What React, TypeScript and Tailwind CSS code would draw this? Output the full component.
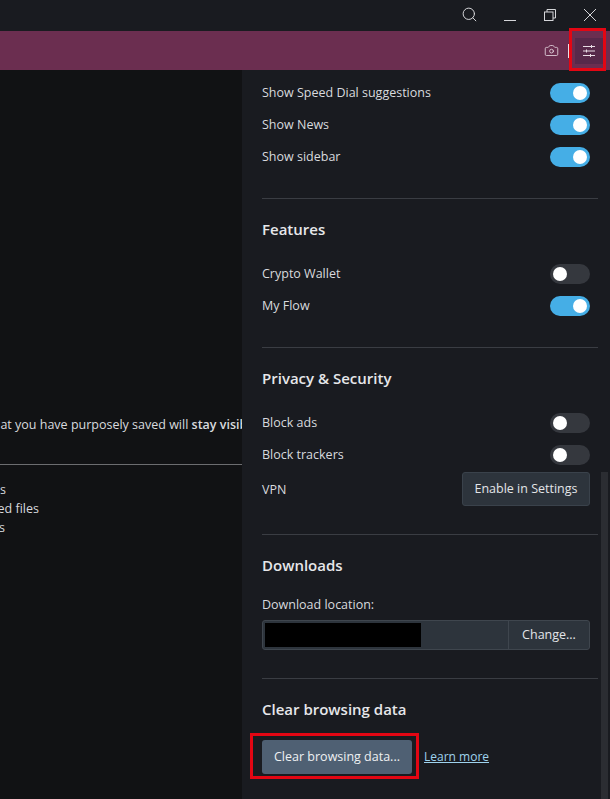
import React from 'react';
import { Camera, Search } from 'lucide-react';

function Toggle({ on }: { on: boolean }) {
  return on ? (
    <div className="flex h-5 w-10 items-center justify-end rounded-full bg-[#45aee6] px-[3px]">
      <div className="h-[14px] w-[14px] rounded-full bg-white" />
    </div>
  ) : (
    <div className="flex h-5 w-10 items-center justify-start rounded-full bg-[#35383e] px-[3px]">
      <div className="h-[14px] w-[14px] rounded-full bg-white" />
    </div>
  );
}

function ToggleRow({ label, on }: { label: string; on: boolean }) {
  return (
    <div className="flex h-8 items-center justify-between text-[12.5px] text-[#d8dade]">
      <span>{label}</span>
      <Toggle on={on} />
    </div>
  );
}

function Section({ title, children }: { title: string; children: React.ReactNode }) {
  return (
    <section className="-mr-2 border-b border-[#3a3d43] pr-2">
      <h3 className="text-[15px] font-semibold leading-5 text-[#e6e7ea]">{title}</h3>
      {children}
    </section>
  );
}

export default function App() {
  return (
    <div
      className="flex h-[799px] w-[610px] flex-col overflow-hidden bg-[#191b20]"
      style={{ fontFamily: '"Open Sans", "Noto Sans", sans-serif' }}
    >
      {/* window title bar */}
      <div className="flex h-[31px] shrink-0 items-center justify-end bg-[#191b20] text-[#d5d6d9]">
        <Search className="mb-[2px] mr-[26px] h-[17px] w-[17px]" strokeWidth={1.4} />
        <div className="mr-[28px] mt-[10px] h-px w-3 bg-[#d5d6d9]" />
        <svg className="mb-[1px] mr-[28px] h-3 w-3" viewBox="0 0 12 12" fill="none" stroke="currentColor" strokeWidth="1">
          <rect x="0.5" y="3" width="8.5" height="8.5" />
          <path d="M3 3V.5h8.5V9H9" />
        </svg>
        <svg className="mb-[1px] mr-[14px] h-3 w-3" viewBox="0 0 12 12" fill="none" stroke="currentColor" strokeWidth="1">
          <path d="M0 0l12 12M12 0L0 12" />
        </svg>
      </div>

      {/* toolbar */}
      <div className="relative flex h-[39px] shrink-0 items-center justify-end bg-[#6b2e50] text-[#e9dce4]">
        <Camera className="mr-[9px] h-[15px] w-[15px]" strokeWidth={1.3} />
        <div className="h-[14px] w-px bg-[#e9dce4]" />
        <div className="ml-[6px] mr-[7px] flex h-[26px] w-[28px] items-center justify-center bg-[#57294a]">
          <svg className="h-3 w-3" viewBox="0 0 12 12" fill="none" stroke="currentColor" strokeWidth="1">
            <path d="M0 1.5h12M0 6h12M0 10.5h12" />
            <path d="M8.5 0v3M3.5 4.5v3M7.5 9v3" />
          </svg>
        </div>
        <div className="absolute right-[4px] top-[-3px] h-[43px] w-[37px] border-[3px] border-[#e30613]" />
      </div>

      <div className="flex min-h-0 flex-1">
        {/* page behind the panel */}
        <div className="w-[242px] shrink-0 overflow-hidden bg-[#111214] text-[12.5px] text-[#d8dade]">
          <div className="mt-[345px] flex w-[258px] justify-end whitespace-nowrap leading-5">
            <span>
              Content that you have purposely saved will <b className="font-semibold">stay visible</b>
            </span>
          </div>
          <div className="mt-[29px] h-px bg-[#6c6d70]" />
          <div className="mt-[15px] whitespace-nowrap leading-[19px]">
            <div className="flex w-[6px] justify-end">Cookies</div>
            <div className="flex w-[39px] justify-end">Downloaded files</div>
            <div className="flex w-[5px] justify-end">Sites</div>
          </div>
        </div>

        {/* easy setup panel */}
        <div className="relative w-[368px] shrink-0 pl-5 pr-5 pt-[7px]">
          <section className="-mr-2 border-b border-[#3a3d43] pb-[25px] pr-2">
            <ToggleRow label="Show Speed Dial suggestions" on />
            <ToggleRow label="Show News" on />
            <ToggleRow label="Show sidebar" on />
          </section>

          <div className="pt-[20px]">
            <Section title="Features">
              <div className="mt-[19px] pb-[25px]">
                <ToggleRow label="Crypto Wallet" on={false} />
                <ToggleRow label="My Flow" on />
              </div>
            </Section>
          </div>

          <div className="pt-[20px]">
            <Section title="Privacy & Security">
              <div className="mt-[19px]">
                <ToggleRow label="Block ads" on={false} />
                <ToggleRow label="Block trackers" on={false} />
                <div className="mt-[1px] flex items-center justify-between pb-[28px] text-[12.5px] text-[#d8dade]">
                  <span className="pt-[2px]">VPN</span>
                  <button className="h-[34px] w-[128px] rounded-[3px] border border-[#3a424b] bg-[#2d343c] text-[12.5px] text-[#e3e5e8]">
                    Enable in Settings
                  </button>
                </div>
              </div>
            </Section>
          </div>

          <div className="pt-[20px]">
            <Section title="Downloads">
              <div className="mt-[20px] text-[12.5px] leading-5 text-[#d8dade]">Download location:</div>
              <div className="mb-[28px] mt-[5px] flex h-[30px] overflow-hidden rounded-[3px] border border-[#3f464e] bg-[#2d343c]">
                <div className="my-[2px] ml-[2px] w-[156px] bg-black" />
                <div className="flex-1" />
                <div className="flex w-[81px] items-center justify-center border-l border-[#3f464e] text-[12.5px] text-[#e3e5e8]">
                  Change...
                </div>
              </div>
            </Section>
          </div>

          <div className="pt-[20px]">
            <h3 className="text-[15px] font-semibold leading-5 text-[#e6e7ea]">Clear browsing data</h3>
            <div className="mt-[21px] flex items-center gap-3">
              <div className="relative">
                <button className="block h-[34px] w-[150px] rounded-[3px] bg-[#4f6073] text-[12.5px] text-[#eef0f2]">
                  Clear browsing data...
                </button>
                <div className="absolute -bottom-[5px] -left-[12px] -right-[7px] -top-[7px] border-[3px] border-[#e30613]" />
              </div>
              <a className="text-[12px] text-[#9fd3ee] underline">Learn more</a>
            </div>
          </div>

          {/* scrollbar */}
          <div className="absolute right-[2px] top-[402px] h-[327px] w-[7px] bg-[#2b2d32]" />
        </div>
      </div>
    </div>
  );
}
